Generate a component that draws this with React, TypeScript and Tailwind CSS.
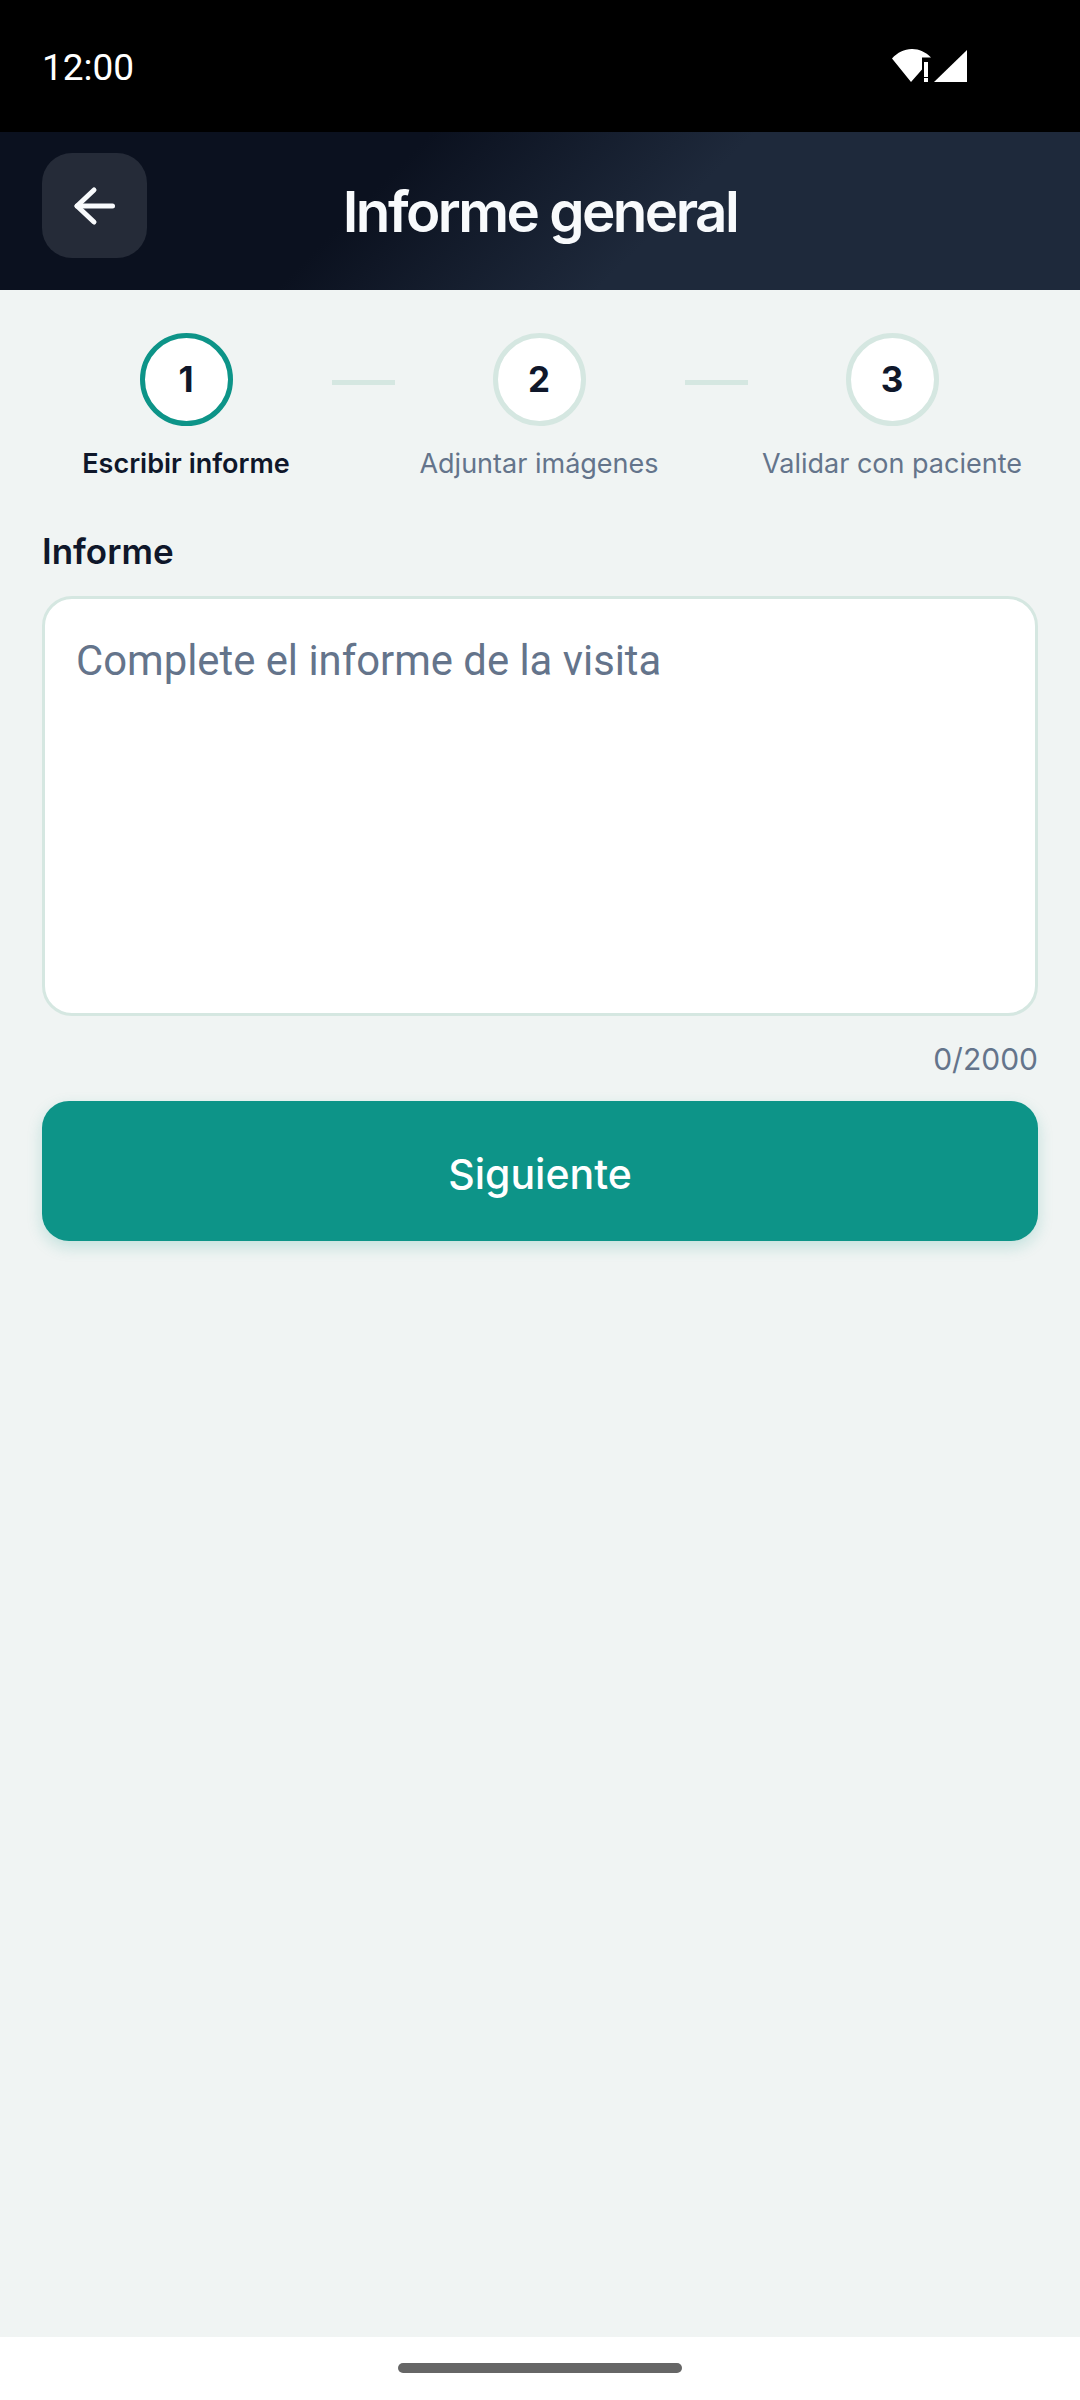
const steps = [
  { n: 1, label: "Escribir informe", active: true },
  { n: 2, label: "Adjuntar imágenes", active: false },
  { n: 3, label: "Validar con paciente", active: false },
];

function StatusBar() {
  return (
    <div className="h-[132px] shrink-0 bg-black flex items-center justify-between pl-[42px] pr-[113px]">
      <span className="text-[37px] mt-[4px] text-white font-['Roboto',sans-serif]">12:00</span>
      <svg width="75" height="33" viewBox="0 0 75 33" className="mt-[-1px]">
        <path d="M0 9.5 C11 -3 28 -3 39 8.5 L30 8.5 L30 20.5 L19 33 Z" fill="#fff" />
        <rect x="32" y="13" width="4" height="15" fill="#fff" />
        <rect x="32" y="29" width="4" height="4" fill="#fff" />
        <path d="M75 1 V33 H42 Z" fill="#fff" />
      </svg>
    </div>
  );
}

function Header() {
  return (
    <div className="h-[158px] shrink-0 relative flex items-center justify-center bg-[linear-gradient(135deg,#0b111f_35%,#1e293b_61%)]">
      <button className="absolute left-[42px] top-[21px] w-[105px] h-[105px] rounded-[30px] bg-[#252b38] flex items-center justify-center">
        <svg width="46" height="42" viewBox="0 0 46 42" fill="none" stroke="#f8fafc" strokeWidth="5" strokeLinecap="round" strokeLinejoin="round">
          <path d="M40.5 21 H5" />
          <path d="M22 5 L5 21 L22 37" />
        </svg>
      </button>
      <h1 className="text-[56.5px] leading-none mt-[2px] font-semibold tracking-[-0.045em] text-[#f8fafc] font-['Inter',sans-serif]">
        Informe general
      </h1>
    </div>
  );
}

function Stepper() {
  return (
    <div className="flex items-start">
      {steps.map((s, i) => (
        <div key={s.n} className="flex items-start">
          {i > 0 && <div className="w-[63px] h-[5px] mt-[47px] bg-[#d5e7e1]" />}
          <div className="w-[288px] mr-[2px] flex flex-col items-center">
            <div
              className={
                s.active
                  ? "w-[93px] h-[93px] rounded-full bg-white border-[5px] border-[#0d9488] flex items-center justify-center"
                  : "w-[93px] h-[93px] rounded-full bg-white border-[5px] border-[#d5e7e1] flex items-center justify-center"
              }
            >
              <span className="text-[35px] font-bold text-[#0f172a]">{s.n}</span>
            </div>
            <span
              className={
                s.active
                  ? "mt-[20px] text-[27px] leading-[36px] font-semibold text-[#0f172a] whitespace-nowrap"
                  : "mt-[20px] text-[27px] leading-[36px] text-[#64748b] whitespace-nowrap"
              }
            >
              {s.label}
            </span>
          </div>
        </div>
      ))}
    </div>
  );
}

export default function App() {
  return (
    <div className="w-[1080px] h-[2400px] flex flex-col bg-[#f0f4f3] font-['Inter',sans-serif] overflow-hidden">
      <StatusBar />
      <Header />
      <div className="flex-1 px-[42px] pt-[43px]">
        <Stepper />
        <label className="block mt-[47px] text-[35px] leading-[44px] font-semibold text-[#0f172a]">Informe</label>
        <textarea
          readOnly
          placeholder="Complete el informe de la visita"
          className="block w-full h-[420px] mt-[23px] px-[31px] pt-[34px] bg-white border-[3px] border-[#d5e7e1] rounded-[30px] resize-none outline-none text-[41.8px] leading-[56px] font-['Roboto',sans-serif] placeholder:text-[#64748b]"
        />
        <div className="mt-[23px] text-right text-[30px] leading-[40px] text-[#64748b]">0/2000</div>
        <button className="w-full h-[140px] mt-[22px] pt-[8px] rounded-[27px] bg-[#0d9488] text-white text-[41px] font-medium shadow-[0_6px_16px_rgba(13,148,136,0.2)]">
          Siguiente
        </button>
      </div>
      <div className="h-[63px] shrink-0 bg-white flex justify-center pt-[26px]">
        <div className="w-[284px] h-[10px] rounded-full bg-[#666666]" />
      </div>
    </div>
  );
}
